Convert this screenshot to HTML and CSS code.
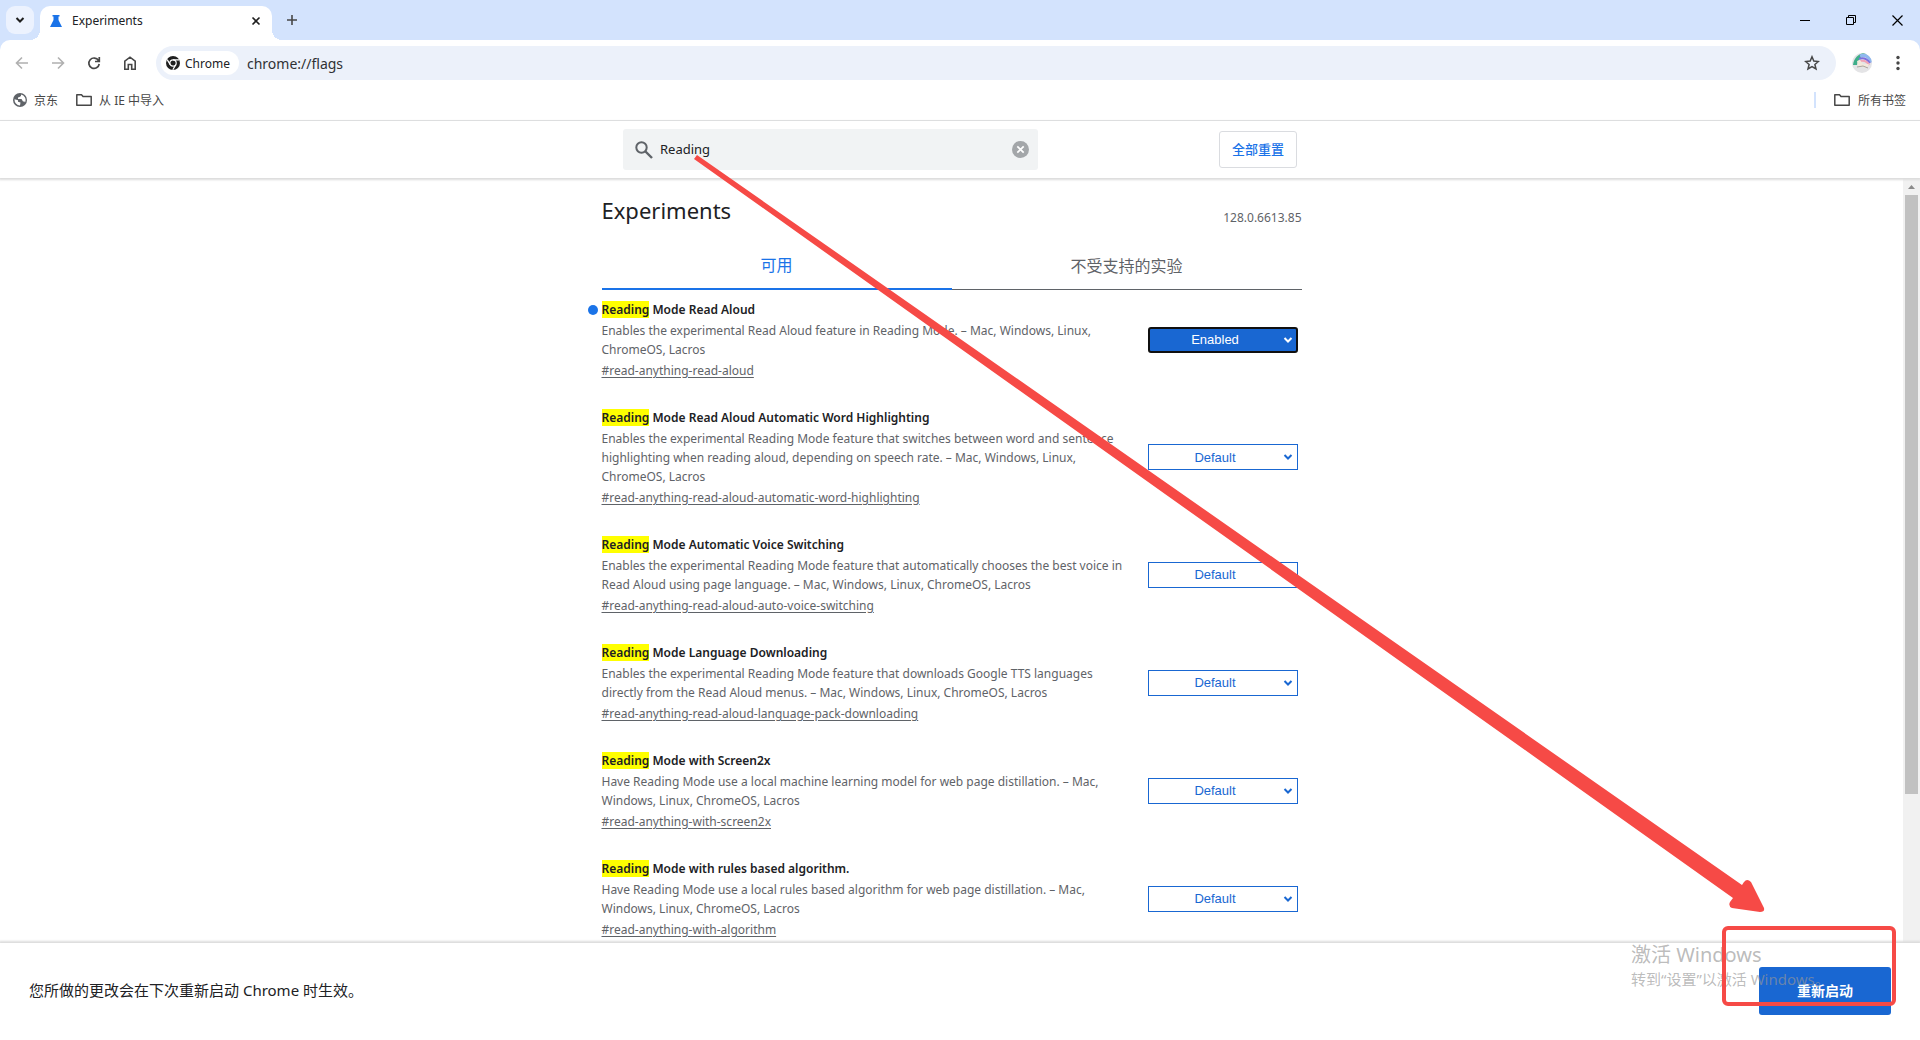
FILE: index.html
```html
<!DOCTYPE html>
<html lang="zh-CN">
<head>
<meta charset="utf-8">
<title>Experiments</title>
<link rel="stylesheet" href="styles.css">
</head>
<body>
<div class="browser">
  <header class="tabstrip">
    <button class="tab-search" aria-label="搜索标签页"><svg width="10" height="10" viewBox="0 0 10 10"><path d="M1.500 3 5 6.500 8.500 3" fill="none" stroke="#1f1f1f" stroke-width="2"/></svg></button>
    <div class="tab">
      <svg width="14" height="14" viewBox="0 0 14 14"><path d="M3.500 1h7v1.500h-1V6L13 13H1L4.500 6V2.500h-1z" fill="#1a73e8"/></svg>
      <span class="tab-title">Experiments</span>
      <button class="plain" aria-label="关闭标签页"><svg width="10" height="10" viewBox="0 0 10 10"><path d="M1.500 1.500l7 7M8.500 1.500l-7 7" stroke="#1f1f1f" stroke-width="1.600"/></svg></button>
    </div>
    <button class="plain new-tab" aria-label="新标签页"><svg width="12" height="12" viewBox="0 0 12 12"><path d="M6 1v10M1 6h10" stroke="#474747" stroke-width="1.600"/></svg></button>
    <div class="window-buttons">
      <button class="plain" aria-label="最小化"><svg width="10" height="10" viewBox="0 0 10 10"><path d="M0 5.500h10" stroke="#000"/></svg></button>
      <button class="plain" aria-label="还原"><svg width="10" height="10" viewBox="0 0 10 10"><path d="M.5 2.500h7v7h-7zM2.500 2V.5h7v7H8" fill="none" stroke="#000"/></svg></button>
      <button class="plain" aria-label="关闭"><svg width="11" height="11" viewBox="0 0 11 11"><path d="M.5.5l10 10M10.500.5l-10 10" stroke="#000" stroke-width="1.200"/></svg></button>
    </div>
  </header>

  <nav class="toolbar">
    <button class="plain" aria-label="后退"><svg width="14" height="14" viewBox="0 0 14 14"><path d="M13 7H2M7 1.500 1.500 7 7 12.500" fill="none" stroke="#b0b0b0" stroke-width="1.600"/></svg></button>
    <button class="plain" aria-label="前进"><svg width="14" height="14" viewBox="0 0 14 14"><path d="M1 7h11M7 1.500 12.500 7 7 12.500" fill="none" stroke="#b0b0b0" stroke-width="1.600"/></svg></button>
    <button class="plain" aria-label="重新加载"><svg width="14" height="14" viewBox="0 0 14 14"><path d="M11.500 4.500A5.200 5.200 0 1 0 12.200 8M12.300 1v4.500H8" fill="none" stroke="#474747" stroke-width="1.700"/></svg></button>
    <button class="plain" aria-label="主页"><svg width="14" height="14" viewBox="0 0 14 14"><path d="M1.800 13.200V5.200L7 1.200l5.200 4v8H8.700V8.500H5.300v4.700z" fill="none" stroke="#474747" stroke-width="1.600"/></svg></button>
    <div class="omnibox">
      <button class="chip">
        <svg width="14" height="14" viewBox="0 0 14 14"><circle cx="7" cy="7" r="7" fill="#1f1f1f"/><circle cx="7" cy="7" r="3.200" fill="none" stroke="#fff" stroke-width="1.200"/><path d="M7 3.800h6.200M4.200 8.600 1.200 3.600M9.800 8.600 6.800 13.800" stroke="#fff" stroke-width="1.200"/></svg>
        <span>Chrome</span>
      </button>
      <input class="url" aria-label="地址" value="chrome://flags">
      <button class="plain" aria-label="收藏"><svg width="16" height="16" viewBox="0 0 16 16"><path d="M8 1.800l1.800 4.300 4.600.4-3.500 3 1.100 4.500L8 11.600 4 14l1.100-4.500-3.500-3 4.600-.4z" fill="none" stroke="#474747" stroke-width="1.500"/></svg></button>
    </div>
    <button class="plain avatar" aria-label="个人资料"><svg width="20" height="20" viewBox="0 0 20 20"><defs><clipPath id="disc"><circle cx="10" cy="10" r="10"/></clipPath></defs><g clip-path="url(#disc)"><path d="M0 0h20v20H0z" fill="#e4e4e6"/><path d="M1 12C2 5 6 1 12 0l3 1C9 3 6 7 5 12z" fill="#3fae8a"/><path d="M8 3c5-2 9 1 12 6" fill="none" stroke="#8fb8ee" stroke-width="3"/><path d="M7 6c5-2 8 0 11 4" fill="none" stroke="#7c6fe0" stroke-width="2"/><path d="M8 8c4-1 7 0 9 4" fill="none" stroke="#f0a3b5" stroke-width="2"/><path d="M5 8l3-1 3 4 6 0-2 4-9-2z" fill="#f3e9dc"/><path d="M5 14l6-1 5 2" fill="none" stroke="#a8a49e"/></g></svg></button>
    <button class="plain" aria-label="菜单"><svg width="4" height="16" viewBox="0 0 4 16"><g fill="#474747"><circle cx="2" cy="2.500" r="1.700"/><circle cx="2" cy="8" r="1.700"/><circle cx="2" cy="13.500" r="1.700"/></g></svg></button>
  </nav>

  <nav class="bookmarks">
    <a href="#jd"><svg width="14" height="14" viewBox="0 0 14 14"><circle cx="7" cy="7" r="7" fill="#5f6368"/><path d="M1.600 6.200l3.400 1v1.500l2.500.800-.5 3A5.600 5.600 0 0 1 1.600 6.200zM8 1.500v1.400L6.500 4 5 4.600v1.500h3.500l1.500 2.400h1.500l.5 1A5.600 5.600 0 0 0 8 1.500z" fill="#fff"/></svg>京东</a>
    <a href="#ie"><svg width="16" height="12" viewBox="0 0 16 12"><path d="M.8.8h4.700l1.500 1.700h8.200v8.700H.8z" fill="none" stroke="#474747" stroke-width="1.500" stroke-linejoin="round"/></svg>从 IE 中导入</a>
    <span class="divider"></span>
    <a class="all" href="#all"><svg width="16" height="12" viewBox="0 0 16 12"><path d="M.8.8h4.700l1.500 1.700h8.200v8.700H.8z" fill="none" stroke="#474747" stroke-width="1.500" stroke-linejoin="round"/></svg>所有书签</a>
  </nav>

  <div class="flags">
    <header class="flags-header">
      <div class="flags-header-inner">
        <label class="search">
          <svg width="18" height="18" viewBox="0 0 18 18"><circle cx="6.500" cy="6.500" r="5.200" fill="none" stroke="#5f6368" stroke-width="2"/><path d="M10.500 10.500 17 17" stroke="#5f6368" stroke-width="2.400"/></svg>
          <input aria-label="搜索实验" value="Reading">
          <button class="plain" aria-label="清除"><svg width="17" height="17" viewBox="0 0 17 17"><circle cx="8.500" cy="8.500" r="8.500" fill="#a3a6a9"/><path d="M5.300 5.300l6.400 6.400M11.700 5.300l-6.400 6.400" stroke="#fff" stroke-width="1.700"/></svg></button>
        </label>
        <button class="reset">全部重置</button>
      </div>
    </header>

    <div class="scroller">
      <main class="content">
        <div class="heading"><h1>Experiments</h1><span class="version">128.0.6613.85</span></div>
        <div class="tabs"><button class="tab-button selected">可用</button><button class="tab-button">不受支持的实验</button></div>

        <section class="flag changed">
          <div class="text"><h2><mark>Reading</mark> Mode Read Aloud</h2>
            <p>Enables the experimental Read Aloud feature in Reading Mode. – Mac, Windows, Linux, ChromeOS, Lacros</p>
            <a href="#read-anything-read-aloud">#read-anything-read-aloud</a></div>
          <div class="choice enabled"><select aria-label="Reading Mode Read Aloud"><option>Enabled</option></select><svg width="10" height="8" viewBox="0 0 10 8"><path d="M1.500 2 5 5.500 8.500 2" fill="none" stroke="currentColor" stroke-width="2"/></svg></div>
        </section>
        <section class="flag">
          <div class="text"><h2><mark>Reading</mark> Mode Read Aloud Automatic Word Highlighting</h2>
            <p>Enables the experimental Reading Mode feature that switches between word and sentence highlighting when reading aloud, depending on speech rate. – Mac, Windows, Linux, ChromeOS, Lacros</p>
            <a href="#read-anything-read-aloud-automatic-word-highlighting">#read-anything-read-aloud-automatic-word-highlighting</a></div>
          <div class="choice"><select aria-label="Automatic Word Highlighting"><option>Default</option></select><svg width="10" height="8" viewBox="0 0 10 8"><path d="M1.500 2 5 5.500 8.500 2" fill="none" stroke="currentColor" stroke-width="2"/></svg></div>
        </section>
        <section class="flag">
          <div class="text"><h2><mark>Reading</mark> Mode Automatic Voice Switching</h2>
            <p>Enables the experimental Reading Mode feature that automatically chooses the best voice in Read Aloud using page language. – Mac, Windows, Linux, ChromeOS, Lacros</p>
            <a href="#read-anything-read-aloud-auto-voice-switching">#read-anything-read-aloud-auto-voice-switching</a></div>
          <div class="choice"><select aria-label="Automatic Voice Switching"><option>Default</option></select><svg width="10" height="8" viewBox="0 0 10 8"><path d="M1.500 2 5 5.500 8.500 2" fill="none" stroke="currentColor" stroke-width="2"/></svg></div>
        </section>
        <section class="flag">
          <div class="text"><h2><mark>Reading</mark> Mode Language Downloading</h2>
            <p>Enables the experimental Reading Mode feature that downloads Google TTS languages directly from the Read Aloud menus. – Mac, Windows, Linux, ChromeOS, Lacros</p>
            <a href="#read-anything-read-aloud-language-pack-downloading">#read-anything-read-aloud-language-pack-downloading</a></div>
          <div class="choice"><select aria-label="Language Downloading"><option>Default</option></select><svg width="10" height="8" viewBox="0 0 10 8"><path d="M1.500 2 5 5.500 8.500 2" fill="none" stroke="currentColor" stroke-width="2"/></svg></div>
        </section>
        <section class="flag">
          <div class="text"><h2><mark>Reading</mark> Mode with Screen2x</h2>
            <p>Have Reading Mode use a local machine learning model for web page distillation. – Mac, Windows, Linux, ChromeOS, Lacros</p>
            <a href="#read-anything-with-screen2x">#read-anything-with-screen2x</a></div>
          <div class="choice"><select aria-label="Screen2x"><option>Default</option></select><svg width="10" height="8" viewBox="0 0 10 8"><path d="M1.500 2 5 5.500 8.500 2" fill="none" stroke="currentColor" stroke-width="2"/></svg></div>
        </section>
        <section class="flag">
          <div class="text"><h2><mark>Reading</mark> Mode with rules based algorithm.</h2>
            <p>Have Reading Mode use a local rules based algorithm for web page distillation. – Mac, Windows, Linux, ChromeOS, Lacros</p>
            <a href="#read-anything-with-algorithm">#read-anything-with-algorithm</a></div>
          <div class="choice"><select aria-label="Rules based algorithm"><option>Default</option></select><svg width="10" height="8" viewBox="0 0 10 8"><path d="M1.500 2 5 5.500 8.500 2" fill="none" stroke="currentColor" stroke-width="2"/></svg></div>
        </section>
      </main>
      <div class="scrollbar"><svg width="7" height="4" viewBox="0 0 7 4"><path d="M0 4 3.500 0 7 4z" fill="#8b8b8b"/></svg><span class="thumb"></span></div>
    </div>

    <footer class="restart">
      <span>您所做的更改会在下次重新启动 Chrome 时生效。</span>
      <button class="restart-button">重新启动</button>
    </footer>
  </div>
</div>

<div class="watermark"><div class="watermark-title">激活 Windows</div><div>转到“设置”以激活 Windows。</div></div>
<svg class="arrow" width="1080" height="762" viewBox="690 152 1080 762"><path d="M697 155 1742 885 1744 882Q1747 878 1751 882L1764 908Q1765 912 1760 912L1732 908Q1728 906 1730 902L1733 898 694 159z" fill="#f64a46"/></svg>
<div class="red-box"></div>
</body>
</html>
```
FILE: styles.css
```css
* { box-sizing: border-box; }
body { margin: 0; font: 12px/19px "Noto Sans", "Noto Sans CJK SC", sans-serif; color: #202124; }
svg { display: block; flex: none; }
h1, h2, p { margin: 0; }
button, input, select { font: inherit; color: inherit; }
.browser { display: flex; flex-direction: column; height: 100vh; overflow: hidden; background: #d3e3fd; }
.plain { border: 0; padding: 0; background: none; display: flex; }

.tabstrip { display: flex; align-items: center; height: 40px; flex: none; padding: 0 10px 0 6px; }
.tab-search { width: 28px; height: 28px; border: 0; border-radius: 9px; background: #ecf2fe; padding: 0; display: flex; align-items: center; justify-content: center; }
.tab { position: relative; display: flex; align-items: center; gap: 9px; align-self: flex-end; height: 34px; width: 232px; margin-left: 6px; padding: 0 11px 5px 9px; background: #fff; border-radius: 10px 10px 0 0; }
.tab::before, .tab::after { content: ""; position: absolute; bottom: 0; width: 10px; height: 10px; }
.tab::before { left: -10px; background: radial-gradient(circle at 0 0, transparent 10px, #fff 10px); }
.tab::after { right: -10px; background: radial-gradient(circle at 100% 0, transparent 10px, #fff 10px); }
.tab-title { flex: 1; }
.new-tab { margin: 0 auto 0 14px; }
.window-buttons { display: flex; align-items: center; gap: 36px; padding-right: 7px; }

.toolbar { display: flex; align-items: center; height: 46px; flex: none; gap: 22px; padding: 0 20px 0 15px; background: #fff; border-radius: 10px 10px 0 0; }
.omnibox { display: flex; align-items: center; flex: 1; height: 34px; border-radius: 17px; background: #ecf1fa; padding: 0 16px 0 5px; margin-left: -3px; }
.avatar { margin-left: -6px; }
.toolbar > :last-child { margin-left: 2px; }
.chip { display: flex; align-items: center; gap: 5px; height: 24px; border: 0; border-radius: 12px; background: #fff; padding: 0 9px 0 5px; }
.url { flex: 1; border: 0; background: none; padding: 0 8px; font-size: 14px; outline: 0; color: #303134; }

.bookmarks { display: flex; align-items: center; gap: 18px; height: 35px; flex: none; padding: 0 14px 6px 13px; background: #fff; border-bottom: 1px solid #dedfe1; color: #474747; }
.bookmarks a { display: flex; align-items: center; gap: 7px; color: inherit; text-decoration: none; }
.bookmarks .divider { margin-left: auto; width: 2px; height: 16px; background: #d3e3fd; }
.bookmarks .all { gap: 8px; }

.flags { flex: 1; min-height: 0; display: flex; flex-direction: column; background: #fff; }
.flags-header { position: relative; flex: none; height: 57px; box-shadow: 0 1px 2px 1px #dcdcdc; background: #fff; }
.flags-header-inner { display: flex; align-items: center; justify-content: space-between; width: 674px; height: 100%; margin: 0 auto; }
.search { display: flex; align-items: center; gap: 7px; width: 415px; height: 41px; padding: 0 9px 0 12px; border-radius: 3px; background: #f1f3f4; }
.search input { flex: 1; min-width: 0; border: 0; padding: 0; background: none; outline: 0; font-size: 13px; }
.reset { width: 78px; height: 37px; padding: 0; border: 1px solid #dadce0; border-radius: 3px; background: #fff; color: #1a73e8; font-size: 13px; font-weight: 500; }

.scroller { flex: 1; min-height: 0; display: flex; overflow: hidden; }
.content { width: 700px; margin: 0 auto; }
.heading { display: flex; justify-content: space-between; height: 67px; padding-top: 15px; }
h1 { font-size: 22px; line-height: 34px; font-weight: 400; }
.version { padding-top: 15px; color: #5f6368; }
.tabs { display: flex; }
.tab-button { flex: 1; height: 45px; border: 0; border-bottom: 1px solid #5f6368; padding: 0 0 2px; background: none; color: #5f6368; font-size: 16px; }
.tab-button.selected { border-bottom: 2px solid #1a73e8; color: #1a73e8; }

.flag { position: relative; display: flex; align-items: center; justify-content: space-between; padding: 8px 4px 17px 0; }
.text { width: 532px; }
.flag h2 { font-size: 12px; line-height: 23px; font-weight: 600; }
.flag mark { background: #ff0; color: inherit; }
.flag p { color: #5f6368; }
.flag .text a { display: block; line-height: 20px; padding-top: 2px; color: #5f6368; text-underline-offset: 2px; }
.flag.changed::before { content: ""; position: absolute; left: -14px; top: 15px; width: 10px; height: 10px; border-radius: 50%; background: #1a73e8; }
.choice { position: relative; width: 150px; color: #1967d2; }
.choice select { display: block; appearance: none; width: 100%; height: 26px; padding: 0 15px 0 0; border: 1px solid #1967d2; border-radius: 0; background: #fff; text-align: center; text-align-last: center; font: 13px "Liberation Sans", sans-serif; }
.choice svg { position: absolute; right: 5px; top: 9px; pointer-events: none; }
.choice.enabled { color: #fff; }
.choice.enabled select { background: #1967d2; border: 2px solid #101010; border-radius: 3px; }

.scrollbar { width: 17px; background: #f1f1f1; display: flex; flex-direction: column; align-items: center; padding-top: 7px; }
.thumb { width: 13px; height: 79%; margin-top: 6px; background: #c1c1c1; }

.restart { position: relative; flex: none; display: flex; align-items: center; justify-content: space-between; height: 97px; padding: 0 29px 2px; background: #fff; box-shadow: 0 -1px 2px 1px #dcdcdc; font-size: 15px; }
.restart-button { width: 132px; height: 48px; border: 0; border-radius: 3px; background: #1967d2; color: #fff; font-size: 14px; font-weight: 700; }

.watermark { position: absolute; right: 91px; bottom: 50px; width: 198px; white-space: nowrap; pointer-events: none; color: rgba(150, 150, 150, .65); font-size: 15px; line-height: 22px; }
.watermark-title { font-size: 20px; line-height: 26px; }
.arrow { position: absolute; left: 690px; top: 152px; pointer-events: none; }
.red-box { position: absolute; left: 1722px; top: 926px; width: 174px; height: 80px; border: 4px solid #f64a46; border-radius: 6px; pointer-events: none; }
```
